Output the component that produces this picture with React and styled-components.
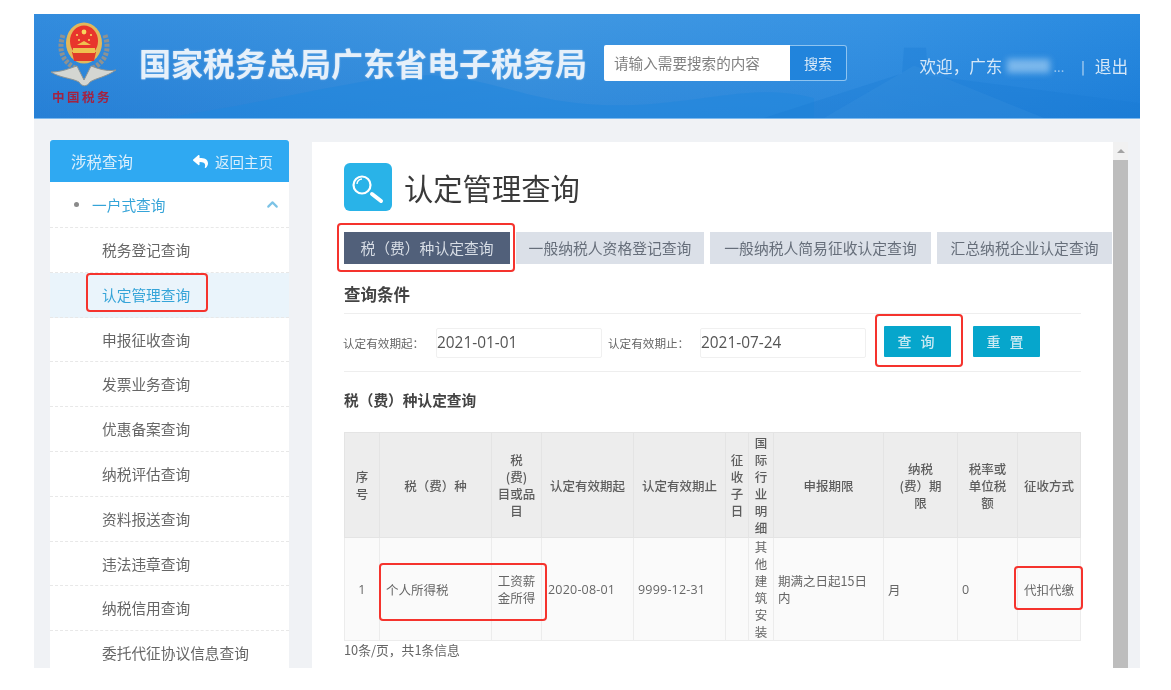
import React from 'react'
import styled, { createGlobalStyle } from 'styled-components'
import { FaReply } from 'react-icons/fa'
import { ChevronUp } from 'lucide-react'

const GlobalStyle = createGlobalStyle`
  html, body {
    margin: 0;
    background: #fff;
  }
  body {
    font-family: "Noto Sans CJK SC", "Open Sans", sans-serif;
    overflow: hidden;
  }
  * {
    box-sizing: border-box;
  }
`

const Frame = styled.div`
  width: 1106px;
  height: 654px;
  margin: 14px 0 0 34px;
  background: #f0f2f5;
  overflow: hidden;
  filter: blur(0.7px);
`

const Header = styled.header`
  position: relative;
  height: 105px;
  display: flex;
  align-items: center;
  padding: 0 12px 0 14px;
  background:
    linear-gradient(to bottom, rgba(255, 255, 255, 0.04), rgba(0, 60, 160, 0.1)),
    linear-gradient(100deg, #2a87dc 0%, #3893e0 45%, #2f8fe2 75%, #2085de 100%);
  border-bottom: 1px solid #7db9ee;
  overflow: hidden;
`

const Scenery = styled.svg`
  position: absolute;
  inset: 0;
  width: 100%;
  height: 100%;
`

const Logo = styled.div`
  position: relative;
  width: 70px;
  display: flex;
  flex-direction: column;
  align-items: center;
  margin-top: -5px;
`

const LogoText = styled.span`
  font-family: "Liberation Serif", "Noto Sans CJK SC", serif;
  font-size: 12.5px;
  font-weight: 700;
  line-height: 14px;
  color: #a32342;
  letter-spacing: 2.5px;
  margin: 3px 0 0 -2px;
  white-space: nowrap;
`

const SiteTitle = styled.h1`
  position: relative;
  margin: -8px 0 0 21px;
  font-size: 32px;
  line-height: 44px;
  font-weight: 700;
  color: #e6f0fa;
  white-space: nowrap;
  text-shadow: 0 0 2px rgba(255, 255, 255, 0.4);
`

const Search = styled.div`
  position: relative;
  display: flex;
  width: 243px;
  height: 36px;
  margin: -6px 0 0 17px;
  flex-shrink: 0;
`

const SearchInput = styled.div`
  flex: 1;
  background: #fff;
  border-radius: 2px 0 0 2px;
  font-size: 14.6px;
  line-height: 36px;
  padding-left: 10px;
  color: #808080;
`

const SearchButton = styled.div`
  width: 57px;
  border: 1px solid #8fc4f0;
  border-left: 0;
  border-radius: 0 3px 3px 0;
  background: #2184dc;
  color: #d7e9f8;
  font-size: 14px;
  line-height: 34px;
  text-align: center;
`

const UserBar = styled.div`
  position: relative;
  display: flex;
  align-items: center;
  margin: 0 0 0 auto;
  font-size: 16.6px;
  color: #d5e7f7;
  white-space: nowrap;
`

const HiddenName = styled.span`
  display: inline-block;
  width: 43px;
  height: 14px;
  margin: 0 3px 0 5px;
  background: rgba(190, 222, 248, 0.55);
  filter: blur(3px);
`

const Ellipsis = styled.span`
  font-size: 13px;
  opacity: 0.7;
`

const Divider = styled.span`
  margin: 0 10px 0 17px;
  font-size: 13px;
`

const Body = styled.div`
  display: flex;
  align-items: flex-start;
  gap: 23px;
  padding: 21px 12px 0 16px;
`

const Sidebar = styled.aside`
  width: 239px;
  flex-shrink: 0;
  background: #fff;
`

const SidebarHead = styled.div`
  height: 42px;
  display: flex;
  align-items: center;
  justify-content: space-between;
  padding: 0 16px 0 21px;
  background: #2fa9f2;
  border-radius: 3px 3px 0 0;
  color: #dbeffc;
  font-size: 15.5px;
`

const BackLink = styled.span`
  display: flex;
  align-items: center;
  gap: 7px;
  font-size: 14.5px;

  svg {
    color: #fff;
  }
`

const GroupRow = styled.div`
  height: 46px;
  display: flex;
  align-items: center;
  padding: 0 8px 0 24px;
  font-size: 14.7px;
  color: #35a4d8;
  border-bottom: 1px dashed #e8e8e8;

  svg {
    margin-left: auto;
    color: #7cc3e6;
  }
`

const Bullet = styled.i`
  width: 5px;
  height: 5px;
  margin-right: 13px;
  border-radius: 50%;
  background: #8a8a8a;
`

const NavItem = styled.div`
  position: relative;
  height: 44.8px;
  padding-left: 52px;
  line-height: 44px;
  font-size: 14.7px;
  color: ${p => (p.$active ? '#35a4d8' : '#666')};
  background: ${p => (p.$active ? '#eaf4fb' : '#fff')};
  border-bottom: 1px dashed #e8e8e8;
`

const Panel = styled.main`
  flex: 1;
  display: flex;
  height: 530px;
  margin-top: 2px;
  background: #fff;
  min-width: 0;
`

const PanelBody = styled.div`
  flex: 1;
  min-width: 0;
  padding: 21px 32px 0;
`

const ScrollBar = styled.div`
  width: 15px;
  display: flex;
  flex-direction: column;
  align-items: stretch;
  background: #f1f1f1;
`

const ScrollArrow = styled.div`
  height: 18px;
  display: flex;
  justify-content: center;
  align-items: center;

  &::before {
    content: '';
    border-left: 4px solid transparent;
    border-right: 4px solid transparent;
    border-bottom: 4px solid #a3a3a3;
  }
`

const ScrollThumb = styled.div`
  flex: 1;
  background: #bdbdbd;
`

const TitleRow = styled.div`
  display: flex;
  align-items: center;
  gap: 12px;
  height: 48px;
`

const TitleIcon = styled.div`
  width: 48px;
  height: 48px;
  border-radius: 6px;
  background: #29b3e8;
`

const PageTitle = styled.h2`
  margin: 0;
  font-size: 29.3px;
  font-weight: 400;
  color: #3a3a3a;
`

const Tabs = styled.div`
  display: grid;
  grid-template-columns: 166px 188px 221px 175px;
  gap: 6px;
  margin: 21px -32px 0 0;
`

const Tab = styled.div`
  position: relative;
  height: 32px;
  line-height: 32px;
  text-align: center;
  font-size: 14.8px;
  white-space: nowrap;
  color: ${p => (p.$active ? '#d8dee6' : '#666e7a')};
  background: ${p => (p.$active ? '#51607a' : '#dbe0e8')};
`

const SectionTitle = styled.h3`
  margin: 0;
  font-weight: 700;
  color: #444;
  font-size: ${p => p.$size || '14.7px'};
  line-height: 24px;
`

const ConditionTitle = styled(SectionTitle)`
  padding: 18px 0 7px;
  border-bottom: 1px solid #eeeeee;
`

const FilterRow = styled.div`
  display: flex;
  align-items: center;
  height: 58px;
  border-bottom: 1px solid #eeeeee;
`

const FilterLabel = styled.label`
  font-size: 11.6px;
  color: #666;
  white-space: nowrap;
  width: ${p => p.$width};
  padding-left: ${p => p.$pad || '0'};
  margin-left: -1px;
`

const DateInput = styled.div`
  width: 166px;
  height: 30px;
  border: 1px solid #f0f0f0;
  border-radius: 2px;
  font-family: "Open Sans", sans-serif;
  font-size: 15.4px;
  line-height: 28px;
  color: #555;
`

const QueryButton = styled.div`
  position: relative;
  width: 67px;
  height: 31px;
  margin: -2px 0 0 ${p => p.$gap};
  background: #06a6cc;
  color: #c9eaf3;
  font-size: 14px;
  font-weight: 500;
  line-height: 31px;
  text-align: center;
  letter-spacing: 3px;
  border-radius: 1px;
`

const TableTitle = styled(SectionTitle)`
  margin-top: 16px;
`

const TableWrap = styled.div`
  position: relative;
  margin-top: 20px;
`

const Table = styled.table`
  width: 736px;
  table-layout: fixed;
  border-collapse: collapse;
  font-size: 12.5px;
  line-height: 17px;
  color: #666;
`

const Th = styled.th`
  height: 105px;
  padding: 0 3px;
  background: #ededed;
  border: 1px solid #e4e4e4;
  font-weight: 500;
  color: #5d5d5d;
  text-align: center;
`

const Td = styled.td`
  position: relative;
  height: 101px;
  padding: 0 ${p => p.$pad || '6px'};
  background: #fafafa;
  border: 1px solid #ececec;
  text-align: ${p => p.$align || 'left'};
`

const Mono = styled.span`
  font-family: "Open Sans", sans-serif;
  letter-spacing: 0.2px;
`

const Pager = styled.div`
  font-size: 12.8px;
  line-height: 18px;
  color: #666;
`

// red annotation boxes drawn on top of the screenshot
const Mark = styled.span`
  position: absolute;
  top: ${p => p.$top}px;
  left: ${p => p.$left}px;
  width: ${p => p.$w}px;
  height: ${p => p.$h}px;
  border: 2.5px solid #f5332d;
  border-radius: 4px;
  pointer-events: none;
`

const columns = [35, 112, 50, 92, 92, 23, 25, 110, 74, 60, 63]

const navItems = [
  '税务登记查询',
  '认定管理查询',
  '申报征收查询',
  '发票业务查询',
  '优惠备案查询',
  '纳税评估查询',
  '资料报送查询',
  '违法违章查询',
  '纳税信用查询',
  '委托代征协议信息查询',
]

const tabs = [
  '税（费）种认定查询',
  '一般纳税人资格登记查询',
  '一般纳税人简易征收认定查询',
  '汇总纳税企业认定查询',
]

const Emblem = () => (
  <svg width="66" height="66" viewBox="0 0 66 66">
    <g fill="none" stroke="#8d9292" strokeWidth="5" strokeDasharray="3 1.5">
      <path d="M13 13 C8 28 12 40 27 47" />
      <path d="M55 13 C60 28 56 40 41 47" />
    </g>
    <path d="M1 50 C12 50 20 46 27 44 L34 58 L41 44 C47 46 56 50 66 48 C56 55 46 56 40 60 C37 65 32 65 29 60 C22 56 10 56 1 50 Z" fill="#d4d6d2" stroke="#8f9492" strokeWidth="1" />
    <ellipse cx="34" cy="21" rx="18" ry="20.5" fill="#e3b85a" />
    <ellipse cx="34" cy="19" rx="14" ry="15.5" fill="#e8352c" />
    <path d="M22 30 H46 L44 39 H24 Z" fill="#e03a2a" />
    <path d="M23 26 H45 V31 H23 Z" fill="#efc24f" />
    <path d="M27 23 L34 19 L41 23 Z" fill="#efc24f" />
    <circle cx="34" cy="10" r="2.4" fill="#f7d65e" />
    <circle cx="27" cy="13" r="1.1" fill="#f7d65e" />
    <circle cx="41" cy="13" r="1.1" fill="#f7d65e" />
    <circle cx="29" cy="18" r="1" fill="#f7d65e" />
    <circle cx="39" cy="18" r="1" fill="#f7d65e" />
  </svg>
)

const SearchGlyph = () => (
  <svg width="48" height="48" viewBox="0 0 48 48" fill="none" stroke="#fff">
    <circle cx="18" cy="22" r="8.5" strokeWidth="2.2" />
    <path d="M13 21 A5 5 0 0 1 18 16" strokeWidth="1.4" />
    <path d="M28 31 L37 38" strokeWidth="4" strokeLinecap="round" />
  </svg>
)

export default function App() {
  return (
    <>
      <GlobalStyle />
      <Frame>
        <Header>
          <Scenery viewBox="0 0 1106 105" preserveAspectRatio="none">
            <path d="M130 105 C260 85 340 60 400 62 C470 66 500 95 600 92 C680 88 720 70 780 85 L780 105 Z" fill="#2186dd" opacity="0.55" />
            <path d="M730 105 L868 60 L870 34 L892 34 L894 62 L1106 90 L1106 105 Z" fill="#1b7bd4" opacity="0.35" />
            <path d="M790 105 L1010 105 L880 52 Z" fill="#4fa0e4" opacity="0.15" />
          </Scenery>
          <Logo>
            <Emblem />
            <LogoText>中国税务</LogoText>
          </Logo>
          <SiteTitle>国家税务总局广东省电子税务局</SiteTitle>
          <Search>
            <SearchInput>请输入需要搜索的内容</SearchInput>
            <SearchButton>搜索</SearchButton>
          </Search>
          <UserBar>
            欢迎，广东
            <HiddenName />
            <Ellipsis>...</Ellipsis>
            <Divider>|</Divider>
            退出
          </UserBar>
        </Header>
        <Body>
          <Sidebar>
            <SidebarHead>
              涉税查询
              <BackLink>
                <FaReply size={15} />
                返回主页
              </BackLink>
            </SidebarHead>
            <GroupRow>
              <Bullet />
              一户式查询
              <ChevronUp size={17} strokeWidth={3} />
            </GroupRow>
            {navItems.map((item, i) => (
              <NavItem key={item} $active={i === 1}>
                {item}
                {i === 1 && <Mark $top={0} $left={36} $w={122} $h={39} />}
              </NavItem>
            ))}
          </Sidebar>
          <Panel>
            <PanelBody>
              <TitleRow>
                <TitleIcon>
                  <SearchGlyph />
                </TitleIcon>
                <PageTitle>认定管理查询</PageTitle>
              </TitleRow>
              <Tabs>
                {tabs.map((tab, i) => (
                  <Tab key={tab} $active={i === 0}>
                    {tab}
                    {i === 0 && <Mark $top={-9} $left={-7} $w={178} $h={49} />}
                  </Tab>
                ))}
              </Tabs>
              <ConditionTitle $size="16.5px">查询条件</ConditionTitle>
              <FilterRow>
                <FilterLabel $width="93px">认定有效期起：</FilterLabel>
                <DateInput>2021-01-01</DateInput>
                <FilterLabel $width="99px" $pad="7px">认定有效期止：</FilterLabel>
                <DateInput>2021-07-24</DateInput>
                <QueryButton $gap="18px">
                  查 询
                  <Mark $top={-12} $left={-9} $w={88} $h={53} />
                </QueryButton>
                <QueryButton $gap="22px">重 置</QueryButton>
              </FilterRow>
              <TableTitle>税（费）种认定查询</TableTitle>
              <TableWrap>
                <Table>
                  <colgroup>
                    {columns.map((w, i) => (
                      <col key={i} width={w} />
                    ))}
                  </colgroup>
                  <thead>
                    <tr>
                      <Th>序<br />号</Th>
                      <Th>税（费）种</Th>
                      <Th>税<br />(费)<br />目或品<br />目</Th>
                      <Th>认定有效期起</Th>
                      <Th>认定有效期止</Th>
                      <Th>征<br />收<br />子<br />日</Th>
                      <Th>国<br />际<br />行<br />业<br />明<br />细</Th>
                      <Th>申报期限</Th>
                      <Th>纳税<br />(费）期<br />限</Th>
                      <Th>税率或<br />单位税<br />额</Th>
                      <Th>征收方式</Th>
                    </tr>
                  </thead>
                  <tbody>
                    <tr>
                      <Td $align="center"><Mono>1</Mono></Td>
                      <Td>个人所得税</Td>
                      <Td $align="center" $pad="2px">工资薪<br />金所得</Td>
                      <Td><Mono>2020-08-01</Mono></Td>
                      <Td $pad="4px"><Mono>9999-12-31</Mono></Td>
                      <Td />
                      <Td $align="center" $pad="2px">其<br />他<br />建<br />筑<br />安<br />装</Td>
                      <Td $pad="4px">期满之日起15日内</Td>
                      <Td $pad="4px">月</Td>
                      <Td $pad="4px"><Mono>0</Mono></Td>
                      <Td $align="center" $pad="2px">
                        代扣代缴
                        <Mark $top={28} $left={-4} $w={69} $h={44} />
                      </Td>
                    </tr>
                  </tbody>
                </Table>
                <Mark $top={131} $left={35} $w={168} $h={58} />
                <Pager>10条/页，共1条信息</Pager>
              </TableWrap>
            </PanelBody>
            <ScrollBar>
              <ScrollArrow />
              <ScrollThumb />
            </ScrollBar>
          </Panel>
        </Body>
      </Frame>
    </>
  )
}
